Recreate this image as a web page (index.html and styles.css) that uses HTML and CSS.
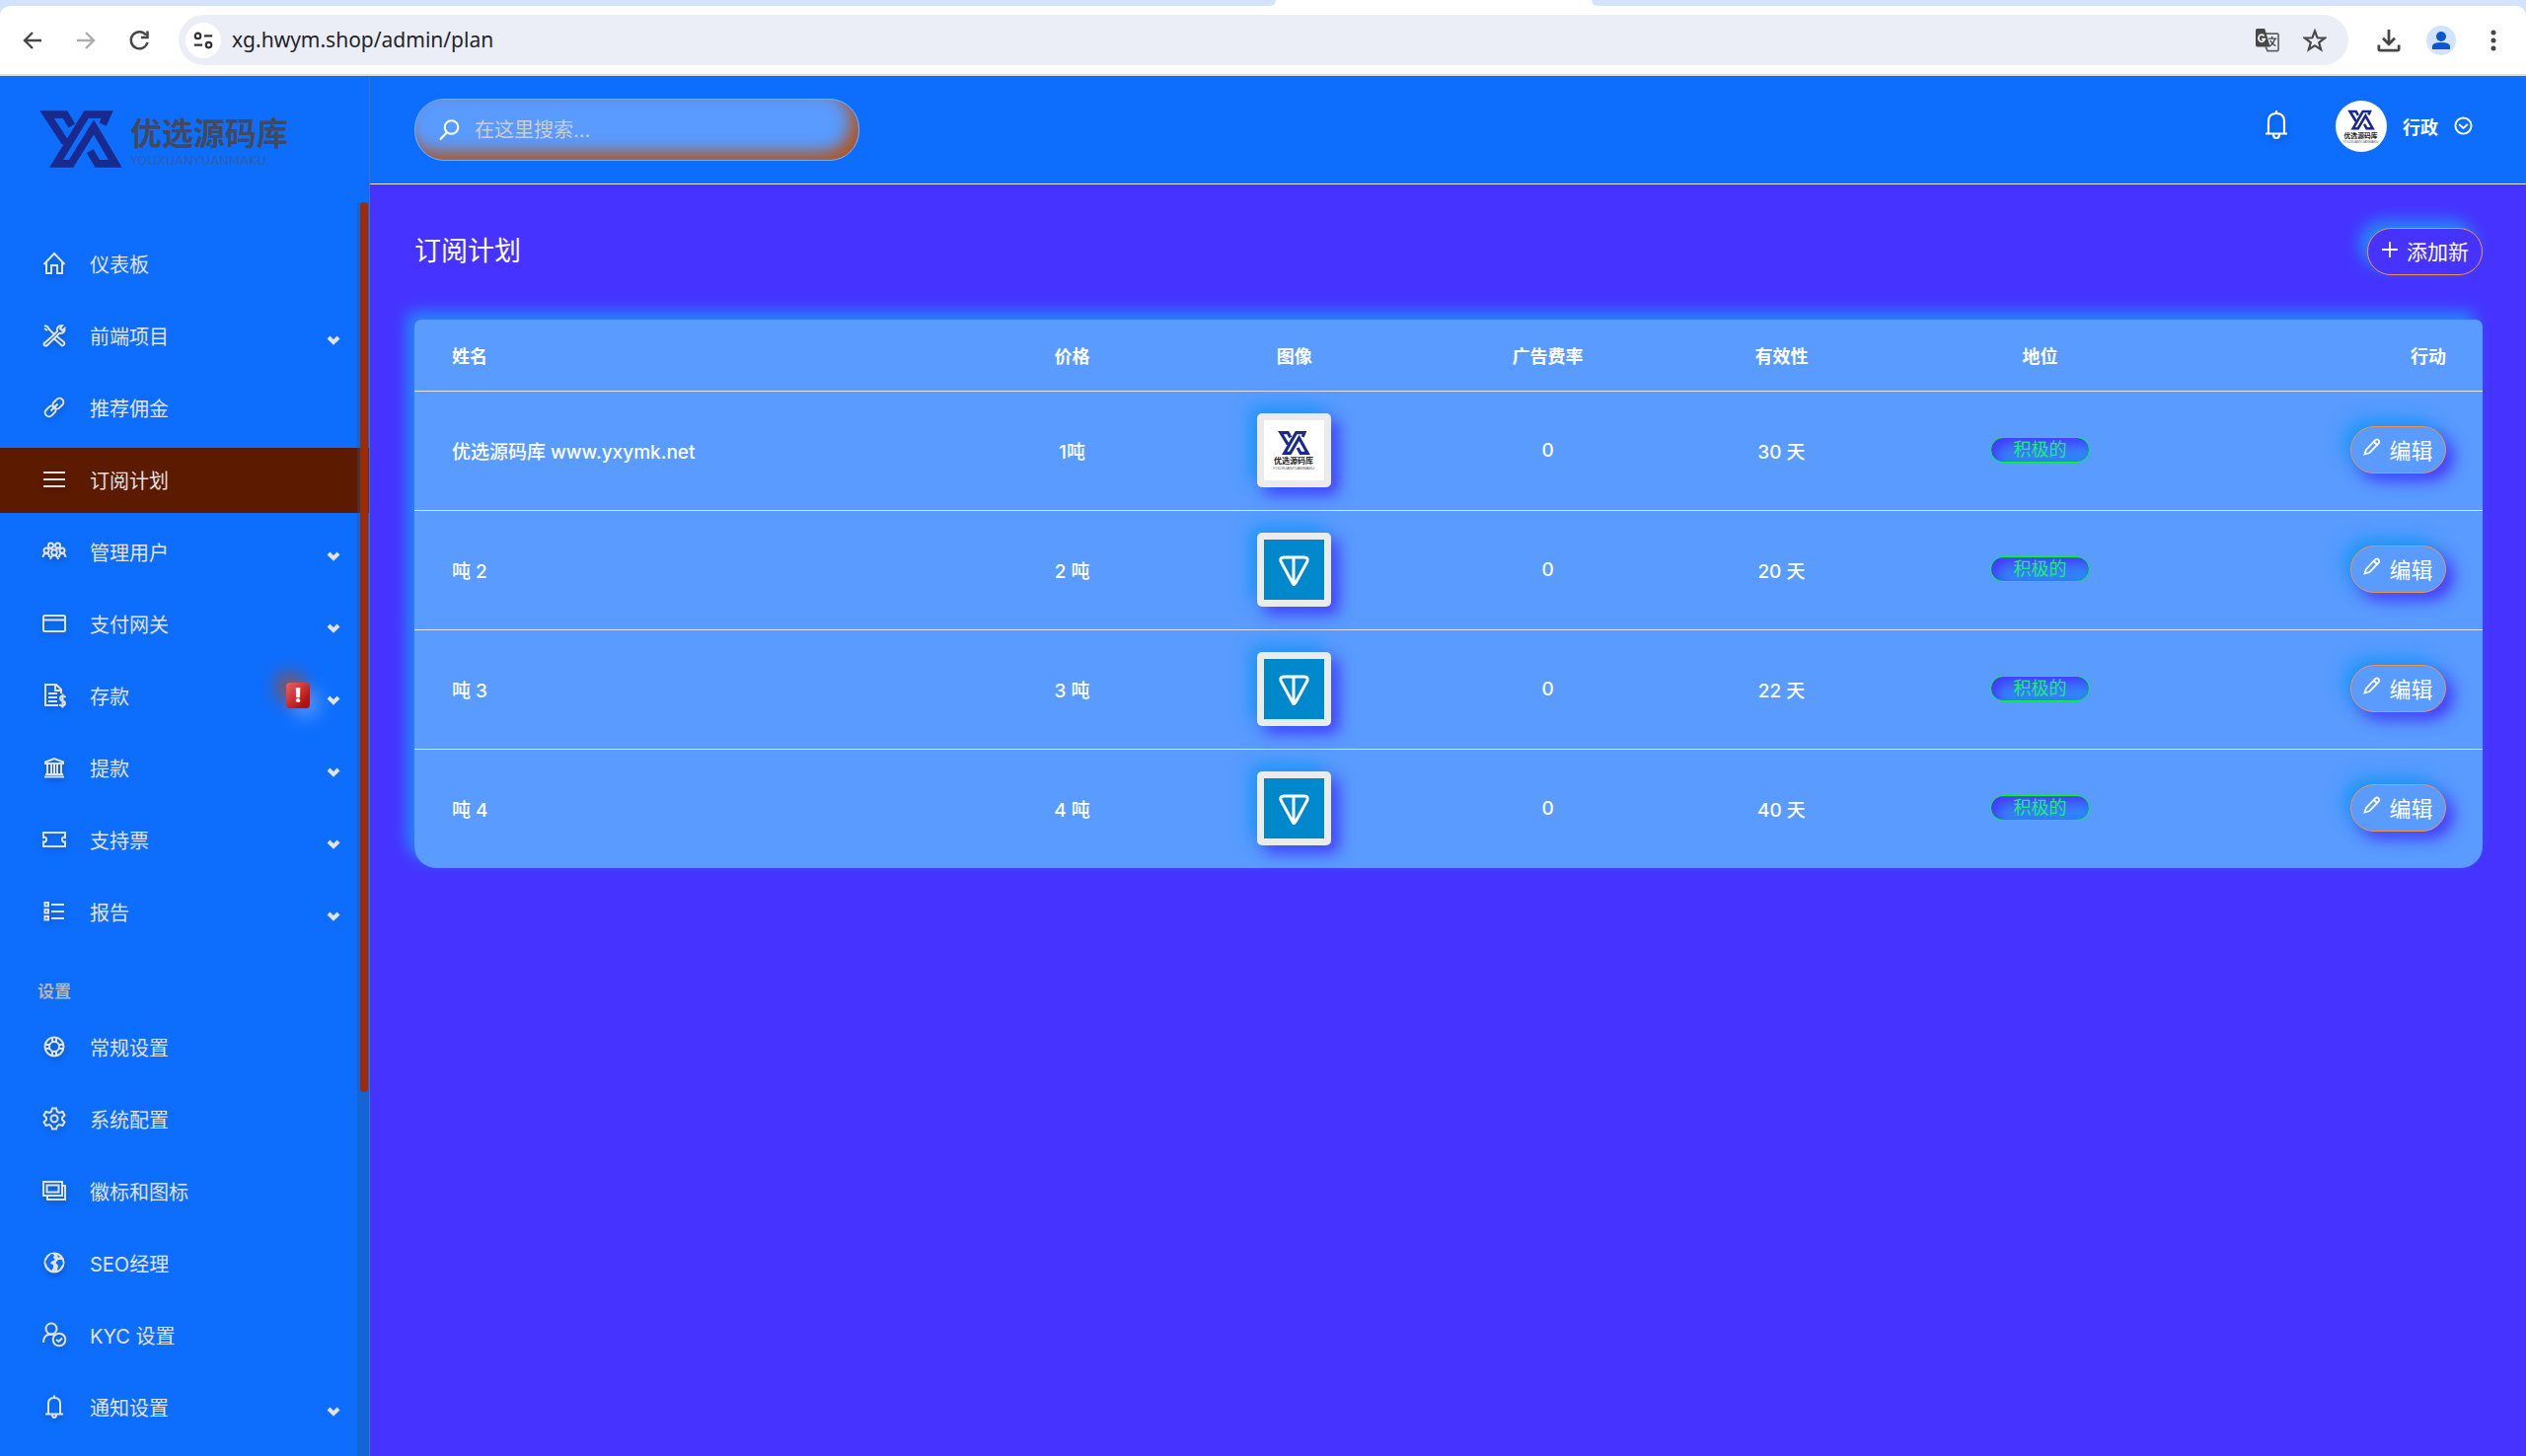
FILE: index.html
```html
<!DOCTYPE html>
<html lang="zh-CN">
<head>
<meta charset="utf-8">
<meta name="viewport" content="width=device-width, initial-scale=1">
<title>订阅计划</title>
<link rel="stylesheet" href="styles.css">
</head>
<body>
<svg class="sprite" aria-hidden="true">
  <symbol id="mark" viewBox="60 68 246 172" preserveAspectRatio="none">
    <g fill="none" stroke="#192a8c" stroke-width="23">
      <path d="M156 114L136 80H82L137 165"/>
      <path d="M248 110L261 80H199L110 228H154L221 118L285 228H232L210 190"/>
    </g>
  </symbol>
  <symbol id="ton" viewBox="0 0 61 61">
    <rect width="61" height="61" fill="#0088cc"/>
    <path d="M20 18H41Q45 18 44 22L32 44Q30 47 29 44L17 22Q16 18 20 18ZM30 19V45" fill="none" stroke="#fff" stroke-width="3" stroke-linejoin="round"/>
  </symbol>
  <symbol id="chev" viewBox="0 0 14 10"><path d="M2 2L7 7L12 2" fill="none" stroke="currentColor" stroke-width="4"/></symbol>
  <symbol id="bell" viewBox="0 0 24 30"><path d="M4 24V12Q4 4 12 4Q20 4 20 12V24M1 24.500H23M9 25Q9 29 12 29Q15 29 15 25M12 1V4" fill="none" stroke="currentColor" stroke-width="2.200"/></symbol>
  <symbol id="pencil" viewBox="0 0 18 18"><path d="M1.500 16.500L3 12L12.500 2Q14 .8 15.200 2Q17 3.500 15.700 5.500L6.500 15ZM11 4L14 7" fill="none" stroke="currentColor" stroke-width="1.800"/></symbol>
</svg>

<header class="browser">
  <div class="tabs"><span class="strip strip-left"></span><span class="tab"></span><span class="strip strip-right"></span></div>
  <div class="toolbar">
    <button class="tool" aria-label="后退"><svg viewBox="0 0 24 24"><path d="M21 12H4M12 4L4 12L12 20" fill="none" stroke="#474747" stroke-width="2.400"/></svg></button>
    <button class="tool" aria-label="前进"><svg viewBox="0 0 24 24"><path d="M3 12H20M12 4L20 12L12 20" fill="none" stroke="#adadb0" stroke-width="2.400"/></svg></button>
    <button class="tool" aria-label="重新加载"><svg viewBox="0 0 24 24"><path d="M19 6.500A8.500 8.500 0 1 0 20.500 14M20.500 2.500V9H14" fill="none" stroke="#474747" stroke-width="2.500"/></svg></button>
    <div class="address">
      <button class="site" aria-label="网站信息"><svg viewBox="0 0 24 24" fill="none" stroke="#333" stroke-width="2.400"><circle cx="6" cy="7" r="3"/><path d="M13 7H22M2 17H11"/><circle cx="18" cy="17" r="3"/></svg></button>
      <input class="url" type="text" aria-label="地址" value="xg.hwym.shop/admin/plan">
      <button class="tool" aria-label="翻译"><svg viewBox="0 0 26 26"><path d="M11 5.500H23.500Q25 5.500 25 7V23Q25 24.500 23.500 24.500H13L11 20" fill="none" stroke="#5f6163" stroke-width="1.800"/><path d="M2 0H10L16 20H2Q0 20 0 18V2Q0 0 2 0Z" fill="#474747"/><path d="M9.500 8Q6 5.500 4 8Q2 11.500 5 14Q8.500 15.500 10 11.500H6.500" fill="none" stroke="#fff" stroke-width="1.800"/><path d="M14 11H23M18 8.500V11M21.500 11Q20 16 15.500 19.500M16 13Q18 17 22 19" fill="none" stroke="#474747" stroke-width="1.500"/></svg></button>
      <button class="tool" aria-label="收藏"><svg viewBox="0 0 24 24"><path d="M12 2.500L14.600 9.300L22 9.600L16.200 14.200L18.200 21.200L12 17.200L5.800 21.200L7.800 14.200L2 9.600L9.400 9.300Z" fill="none" stroke="#474747" stroke-width="2.200"/></svg></button>
    </div>
    <button class="tool end" aria-label="下载"><svg viewBox="0 0 26 26"><path d="M13 1V16M6.500 10.500L13 17L19.500 10.500M2 18V22.500Q2 24 3.500 24H22.500Q24 24 24 22.500V18" fill="none" stroke="#474747" stroke-width="3"/></svg></button>
    <button class="tool end person" aria-label="个人资料"><svg viewBox="0 0 30 30"><circle cx="15" cy="11" r="5" fill="#0b57d0"/><path d="M6 24V21Q6 17 15 17Q24 17 24 21V24Z" fill="#0b57d0"/></svg></button>
    <button class="tool end" aria-label="菜单"><svg viewBox="0 0 24 24" fill="#474747"><circle cx="12" cy="4" r="2.500"/><circle cx="12" cy="12" r="2.500"/><circle cx="12" cy="20" r="2.500"/></svg></button>
  </div>
</header>

<div class="app">
  <aside class="sidebar">
    <a class="brand" href="#">
      <svg class="brand-mark"><use href="#mark"/></svg>
      <span class="brand-text"><span class="brand-name">优选源码库</span><span class="brand-sub">YOUXUANYUANMAKU</span></span>
    </a>
    <div class="side-scroll">
      <nav class="nav">
        <a class="item" href="#"><svg class="ico" viewBox="0 0 24 24"><path d="M1.500 13L12 2L22.500 13M4 11V22H9V14H15V22H20V11"/></svg><span>仪表板</span></a>
        <a class="item" href="#"><svg class="ico" viewBox="0 0 24 24"><path d="M2 2L5 3L7 6L12 11M2 5L5 7M2 20L12 11L15 8Q14 2 20 2L18 5L20 7L22.500 5Q23 10 17 10L5 22Q3 23 2 22T2 19M14 12.500L22 19Q23 22 20 22.500L11.500 15"/></svg><span>前端项目</span><svg class="chev"><use href="#chev"/></svg></a>
        <a class="item" href="#"><svg class="ico" viewBox="0 0 24 24"><g transform="rotate(-45 12 12)"><rect x="0.500" y="8" width="12" height="8" rx="4"/><rect x="11.500" y="8" width="12" height="8" rx="4"/><path d="M7 12H17"/></g></svg><span>推荐佣金</span></a>
        <a class="item active" href="#" aria-current="page"><svg class="ico" viewBox="0 0 24 24"><path d="M1 5H23M1 12H23M1 19H23"/></svg><span>订阅计划</span></a>
        <a class="item" href="#"><svg class="ico" viewBox="0 0 24 24"><circle cx="8.500" cy="6" r="2.500"/><circle cx="15.500" cy="6" r="2.500"/><circle cx="4" cy="11" r="2.500"/><circle cx="20" cy="11" r="2.500"/><circle cx="12" cy="13" r="2.800"/><path d="M.5 18Q1 14 4 14Q7 14 7 18M17 18Q17 14 20 14Q23 14 23.500 18M8 20Q9 16 12 16Q15 16 16 20M6 9Q8 8 10 10M14 10Q16 8 18 9"/></svg><span>管理用户</span><svg class="chev"><use href="#chev"/></svg></a>
        <a class="item" href="#"><svg class="ico" viewBox="0 0 24 24"><rect x="1" y="4" width="22" height="16" rx="1.500"/><path d="M2 8.500H22"/></svg><span>支付网关</span><svg class="chev"><use href="#chev"/></svg></a>
        <a class="item" href="#"><svg class="ico" viewBox="0 0 24 24"><path d="M16 22H3V1H14L19 6V10M13 1V7H19M6 10H15M6 14H15M6 18H15M23.500 14Q22 12 20 12.500T18 15T20.500 17.500T23 20T20.500 22.500T17.500 21M20.500 10.500V24.500"/></svg><span>存款</span><em class="alert">!</em><svg class="chev"><use href="#chev"/></svg></a>
        <a class="item" href="#"><svg class="ico" viewBox="0 0 24 24"><path d="M3 6.500L12 3L21 6.500V8H3ZM2 21.500H22M3 19H21M5 9V19M9 9V19M12 9V19M15 9V19M19 9V19"/></svg><span>提款</span><svg class="chev"><use href="#chev"/></svg></a>
        <a class="item" href="#"><svg class="ico" viewBox="0 0 24 24"><path d="M1 5H23V10Q20 9 20 12T23 14.500V19H1V14.500Q4 15 4 12T1 10Z"/></svg><span>支持票</span><svg class="chev"><use href="#chev"/></svg></a>
        <a class="item" href="#"><svg class="ico" viewBox="0 0 24 24"><path d="M2.500 3H6V6.500H2.500ZM2.500 10H6V13.500H2.500ZM2.500 17H6V20.500H2.500ZM9 5H22M9 12H22M9 19H22"/></svg><span>报告</span><svg class="chev"><use href="#chev"/></svg></a>
        <h2 class="group">设置</h2>
        <a class="item" href="#"><svg class="ico" viewBox="0 0 24 24"><circle cx="12" cy="12" r="9.500"/><circle cx="12" cy="12" r="5"/><path d="M10 2V7M14 2V7M10 17V22M14 17V22M2 10H7M2 14H7M17 10H22M17 14H22"/></svg><span>常规设置</span></a>
        <a class="item" href="#"><svg class="ico" viewBox="0 0 24 24"><path d="M10 1.500H14L15 5L17 6L20.500 5L22.500 8.500L20 11V13L22.500 15.500L20.500 19L17 18L15 19.500L14 22.500H10L9 19.500L7 18L3.500 19L1.500 15.500L4 13V11L1.500 8.500L3.500 5L7 6L9 5Z"/><circle cx="12" cy="12" r="3.500"/></svg><span>系统配置</span></a>
        <a class="item" href="#"><svg class="ico" viewBox="0 0 24 24"><path d="M1 3H20V17H1ZM4.500 6.500H16.500V13.500H4.500ZM5 17V21H23V7H20"/></svg><span>徽标和图标</span></a>
        <a class="item" href="#"><svg class="ico" viewBox="0 0 24 24"><circle cx="12" cy="12" r="10.500" fill="currentColor" stroke="none"/><path d="M9 3L12 4L11 7L13 9L9 11L8 13L11 14V17L9 20L5 16L3 11L6 6ZM16 9L20 9L21 13L17 19L15 20L16 15L13.500 12ZM15 4L18 6L16 7Z" fill="#0d6efd" stroke="none"/></svg><span>SEO经理</span></a>
        <a class="item" href="#"><svg class="ico" viewBox="0 0 24 24"><circle cx="9" cy="6" r="5.500"/><path d="M1 20Q1 12 8 11.500Q11 11.500 12 12.500"/><circle cx="17" cy="17" r="6.300"/><path d="M14 17L16.500 19L20 15.500"/></svg><span>KYC 设置</span></a>
        <a class="item" href="#"><svg class="ico" viewBox="0 0 24 24"><path d="M6 19V9Q6 3 12 3Q18 3 18 9V19M3 19.500H21M10 20Q10 23 12 23T14 20M12 .5V3"/></svg><span>通知设置</span><svg class="chev"><use href="#chev"/></svg></a>
      </nav>
      <div class="track"><div class="thumb"></div></div>
    </div>
  </aside>

  <div class="main">
    <header class="topbar">
      <form class="search" role="search">
        <label for="q" aria-label="搜索"><svg viewBox="0 0 24 24"><circle cx="14.500" cy="9" r="6.800" fill="none" stroke="#fff" stroke-width="2"/><path d="M10 14L3 21.500" stroke="#fff" stroke-width="2.200"/></svg></label>
        <input id="q" type="search" placeholder="在这里搜索...">
      </form>
      <div class="account">
        <button class="bell" aria-label="通知"><svg><use href="#bell"/></svg></button>
        <button class="user"><svg class="avatar" viewBox="0 0 61 61"><rect width="61" height="61" fill="#fff"/><use href="#mark" x="14" y="11" width="33" height="24"/><text x="30" y="44" class="tile-name">优选源码库</text><text x="30" y="50" class="tile-sub">YOUXUANYUANMAKU</text></svg><span>行政</span><svg class="drop" viewBox="0 0 20 20"><circle cx="10" cy="10" r="8.500"/><path d="M5.500 8.500L10 12.500L14.500 8.500"/></svg></button>
      </div>
    </header>

    <main class="content">
      <div class="heading">
        <h1>订阅计划</h1>
        <button class="pill add"><svg viewBox="0 0 18 18"><path d="M9 1V17M1 9H17" stroke="currentColor" stroke-width="1.800"/></svg>添加新</button>
      </div>
      <table class="plans">
        <thead>
          <tr><th class="c-name">姓名</th><th class="c-price">价格</th><th class="c-image">图像</th><th class="c-rate">广告费率</th><th class="c-valid">有效性</th><th class="c-state">地位</th><th class="c-act">行动</th></tr>
        </thead>
        <tbody>
          <tr><td>优选源码库 www.yxymk.net</td><td>1吨</td><td><svg class="thumbnail" viewBox="0 0 61 61"><rect width="61" height="61" fill="#fff"/><use href="#mark" x="14" y="11" width="33" height="24"/><text x="30" y="44" class="tile-name">优选源码库</text><text x="30" y="50" class="tile-sub">YOUXUANYUANMAKU</text></svg></td><td>0</td><td>30 天</td><td><span class="badge">积极的</span></td><td><button class="pill edit"><svg><use href="#pencil"/></svg>编辑</button></td></tr>
          <tr><td>吨 2</td><td>2 吨</td><td><svg class="thumbnail"><use href="#ton"/></svg></td><td>0</td><td>20 天</td><td><span class="badge">积极的</span></td><td><button class="pill edit"><svg><use href="#pencil"/></svg>编辑</button></td></tr>
          <tr><td>吨 3</td><td>3 吨</td><td><svg class="thumbnail"><use href="#ton"/></svg></td><td>0</td><td>22 天</td><td><span class="badge">积极的</span></td><td><button class="pill edit"><svg><use href="#pencil"/></svg>编辑</button></td></tr>
          <tr><td>吨 4</td><td>4 吨</td><td><svg class="thumbnail"><use href="#ton"/></svg></td><td>0</td><td>40 天</td><td><span class="badge">积极的</span></td><td><button class="pill edit"><svg><use href="#pencil"/></svg>编辑</button></td></tr>
        </tbody>
      </table>
    </main>
  </div>
</div>
</body>
</html>
```
FILE: styles.css
```css
* { box-sizing: border-box; }

body {
  margin: 0;
  min-height: 100vh;
  display: flex;
  flex-direction: column;
  background: #4633ff;
  color: #fff;
  font-family: Inter, "Noto Sans CJK SC", sans-serif;
  font-size: 19px;
}

a { color: inherit; text-decoration: none; }

button, input { font: inherit; color: inherit; border: 0; background: none; padding: 0; margin: 0; outline: 0; }

svg { display: block; flex: none; }

.sprite { position: absolute; width: 0; height: 0; }

/* Browser frame */
.browser { background: #d3e3fd; border-bottom: 2px solid #dedfe1; }
.tabs { display: flex; height: 6px; background: #fff; }
.strip { background: #d3e3fd; }
.strip-left { flex: 0 0 50.5%; border-bottom-right-radius: 10px; }
.tab { flex: 0 0 12.5%; }
.strip-right { flex: 1; border-bottom-left-radius: 10px; }
.toolbar {
  display: flex;
  align-items: center;
  height: 69px;
  padding: 0 21px 0 21px;
  background: #fff;
  border-radius: 10px 10px 0 0;
}
.tool { width: 24px; height: 24px; margin-right: 30px; }
.tool svg { width: 100%; height: 100%; }
.address {
  flex: 1;
  display: flex;
  align-items: center;
  height: 51px;
  margin: 0 3px 0 -2px;
  padding: 0 22px 0 7px;
  border-radius: 26px;
  background: #ebeef7;
}
.address .tool { margin: 0 0 0 24px; }
.site { display: grid; place-items: center; width: 36px; height: 36px; margin-right: 11px; border-radius: 50%; background: #fff; }
.site svg { width: 22px; height: 22px; }
.url { flex: 1; height: 36px; padding-bottom: 2px; font-family: "Noto Sans", sans-serif; font-size: 21px; color: #252527; }
.tool.end { margin: 0 0 0 26px; }
.tool.end.person { width: 30px; height: 30px; border-radius: 50%; background: #d3e3fd; }

/* Shell */
.app { flex: 1; display: flex; }

.sidebar {
  flex: 0 0 375px;
  display: flex;
  flex-direction: column;
  background: #0d6efd;
  border-right: 1px solid #3b74c4;
  color: #e2e2e2;
}
.brand { display: flex; align-items: center; gap: 8px; height: 128px; padding-left: 40px; }
.brand-mark { width: 84px; height: 58px; }
.brand-text { display: flex; flex-direction: column; padding-top: 4px; }
.brand-name { font-size: 32px; line-height: 40px; font-weight: 700; color: #44495a; }
.brand-sub { font-family: "DejaVu Sans", sans-serif; font-size: 13px; line-height: 14px; color: #2d5fb4; }

.side-scroll { flex: 1; position: relative; }
.nav { display: flex; flex-direction: column; padding-top: 30px; }
.item {
  display: flex;
  align-items: center;
  height: 66px;
  margin-bottom: 7px;
  padding: 0 29px 2px 43px;
  font-size: 20px;
  font-weight: 400;
}
.item.active { background: #5c1a00; }
.ico {
  width: 24px;
  height: 24px;
  margin-right: 24px;
  overflow: visible;
  fill: none;
  stroke: currentColor;
  stroke-width: 2;
  filter: drop-shadow(1px 3px 3px rgba(0, 0, 0, .2));
}
.chev { width: 14px; height: 10px; margin: 9px 0 0 auto; }
.alert {
  display: grid;
  place-items: center;
  width: 24px;
  height: 26px;
  margin-left: auto;
  border-radius: 4px;
  background: linear-gradient(135deg, #ec6262, #b30f0f 80%);
  box-shadow: -8px -8px 18px rgba(190, 70, 10, .8), 8px 8px 18px #5a9bff;
  color: #fff;
  font-size: 20px;
  font-weight: 900;
  font-style: normal;
}
.alert + .chev { margin-left: 17px; }
.group { height: 24px; margin: 28px 0 12px 38px; font-size: 17px; line-height: 24px; font-weight: 700; color: #b4b4b4; }

.track { position: absolute; top: 0; right: 0; bottom: 0; width: 12px; background: rgba(34, 85, 150, .4); }
.thumb { width: 8px; height: 71%; margin-left: 3px; border-radius: 4px; background: #a02b00; }

.main { flex: 1; min-width: 0; }
.topbar {
  display: flex;
  align-items: center;
  justify-content: space-between;
  height: 110px;
  padding: 0 54px 0 45px;
  background: #0d6efd;
  border-bottom: 1px solid #e8eaf2;
}
.search {
  display: flex;
  align-items: center;
  gap: 14px;
  width: 451px;
  height: 63px;
  padding: 0 22px;
  border: 1px solid #6fabff;
  border-radius: 30px;
  background: #599bff;
  box-shadow: inset -8px -8px 16px #b0551e;
}
.search svg { width: 24px; height: 24px; }
.search input { flex: 1; min-width: 0; font-size: 20px; font-weight: 400; }
.search input::placeholder { color: #cdcdcd; opacity: 1; }

.account { display: flex; align-items: center; gap: 48px; padding-bottom: 8px; }
.bell svg { width: 24px; height: 30px; margin-bottom: 4px; filter: drop-shadow(1px 3px 3px rgba(0, 0, 0, .2)); }
.user { display: flex; align-items: center; gap: 16px; font-size: 18px; font-weight: 700; }
.avatar { width: 52px; height: 52px; border-radius: 50%; }
.drop { width: 19px; height: 19px; fill: none; stroke: #fff; stroke-width: 2; }

.tile-name { font: 700 8px "Noto Sans CJK SC", sans-serif; text-anchor: middle; fill: #222; }
.tile-sub { font: 4px "Liberation Sans", sans-serif; text-anchor: middle; fill: #555; }

/* Content */
.content { padding: 44px 44px 45px 45px; }
.heading { display: flex; align-items: center; justify-content: space-between; margin-bottom: 45px; }
h1 { margin: 0; font-size: 27px; line-height: 40px; font-weight: 400; }

.pill {
  display: inline-flex;
  align-items: center;
  justify-content: center;
  height: 48px;
  padding-bottom: 2px;
  border: 1px solid #f5924a;
  border-radius: 24px;
}
.add {
  width: 117px;
  gap: 8px;
  font-size: 21px;
  background: #4633ff;
  box-shadow: -8px -8px 16px #258afa;
}
.add svg { width: 18px; height: 18px; margin-bottom: 2px; }
.edit {
  width: 97px;
  gap: 8px;
  font-size: 22px;
  font-weight: 400;
  background: #599bff;
  box-shadow: -7px -7px 18px #1c97f8, 7px 7px 16px #4633ff;
}
.edit svg { width: 18px; height: 18px; margin-bottom: 5px; }

.plans {
  width: 100%;
  table-layout: fixed;
  border-spacing: 0;
  border-radius: 7px 7px 22px 22px;
  background: #599bff;
  box-shadow: -8px -8px 16px #258afa;
  text-align: center;
}
.plans th { height: 73px; padding: 0; font-size: 18px; font-weight: 700; border-bottom: 1px solid #dfe6f2; }
.plans td { height: 121px; padding: 0 0 2px; font-weight: 500; border-bottom: 1px solid #dfe6f2; }
.plans tr:last-child td { height: 120px; border-bottom: 0; }
.plans thead tr th { border-bottom: 1px solid #dfe6f2; }
.plans th:first-child, .plans td:first-child { padding-left: 38px; text-align: left; }
.plans th:last-child, .plans td:last-child { padding-right: 37px; text-align: right; }
.c-name { width: 26.7%; }
.c-price { width: 10.2%; }
.c-image { width: 11.3%; }
.c-rate { width: 13.2%; }
.c-valid { width: 9.4%; }
.c-state { width: 15.6%; }
.c-act { width: 13.6%; }

.thumbnail {
  width: 75px;
  height: 75px;
  margin: 0 auto;
  padding: 7px;
  border-radius: 5px;
  background: #ebebeb;
  box-shadow: -7px -7px 18px #1c97f8, 7px 7px 16px #4633ff;
}
.badge {
  display: inline-flex;
  align-items: center;
  justify-content: center;
  width: 101px;
  height: 26px;
  border: 1px solid #00ff2a;
  border-radius: 13px;
  background: #3a78fb;
  box-shadow: inset 5px 5px 12px #4633ff, inset -5px -5px 12px #2a90f8;
  color: #1bee74;
  font-size: 18px;
  font-weight: 400;
  line-height: 24px;
  vertical-align: middle;
}
```
